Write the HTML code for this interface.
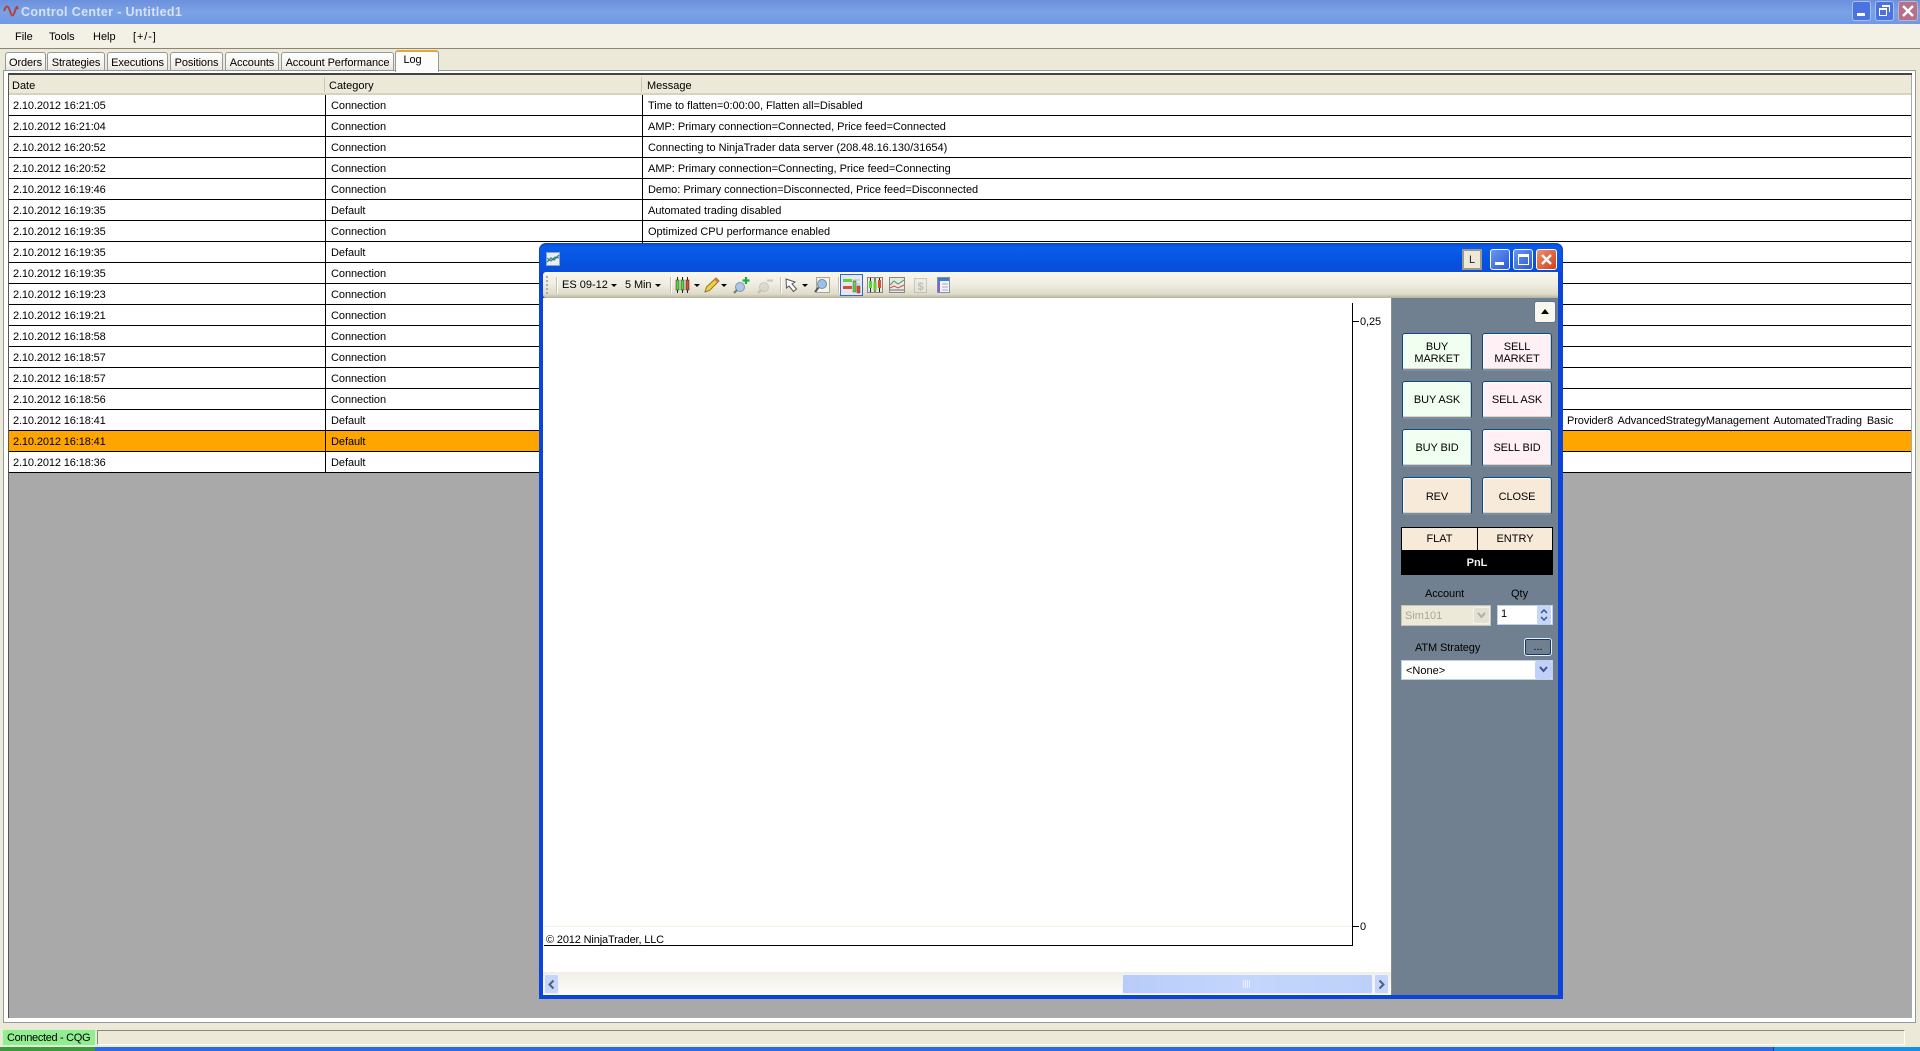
<!DOCTYPE html>
<html><head><meta charset="utf-8"><title>Control Center - Untitled1</title>
<style>
html,body{margin:0;padding:0;width:1920px;height:1051px;overflow:hidden;background:#ece9d8}
body{position:relative;font:11px/14px "Liberation Sans",sans-serif;color:#000}
div,svg,span{position:absolute;white-space:nowrap;box-sizing:border-box}
.tab{top:52px;height:19px;background:linear-gradient(#fff,#f2f0e8 70%,#e4e2d6);border:1px solid #919b9c;border-bottom:0;border-radius:3px 3px 0 0;text-align:center;line-height:21px;font-size:11px;letter-spacing:-.1px}
.r{left:9px;width:1902px;height:21px;background:#fff;border-bottom:1px solid #000}
.r span{top:4px}
.r .d{left:4px;letter-spacing:-.12px}.r .c{left:322px;letter-spacing:-.06px}.r .m{left:639px;letter-spacing:-.02px}
.r i{position:absolute;top:0;width:1px;height:21px;background:#000}
.o{background:#ffa500}
.b{width:70px;height:38px;border:1px solid #0d4a80;border-bottom:2px solid #7d8ea0;border-radius:3px;box-shadow:inset 1px 1px 0 #fff,inset -1px -1px 0 #d8d5c6;text-align:center;color:#000;font-size:11px;line-height:12px;letter-spacing:-.1px}
.g{background:#f0fff0}.p{background:#fff0f5}.n{background:#f8ead9}
.wb{border:1px solid #fff;border-radius:3px;top:249px;width:20px;height:21px}
.sep{top:277px;width:1px;height:16px;background:#c5c2b0;border-right:1px solid #fff;width:2px}
.ar{width:0;height:0;border:3px solid transparent;border-top:3px solid #000;border-bottom:0}
</style></head><body>

<!-- main title bar -->
<div style="left:0;top:0;width:1920px;height:24px;background:linear-gradient(#6c90dc,#7aa2e6 50%,#7099e2)"></div>
<svg style="left:3px;top:2px" width="16" height="18" viewBox="0 0 16 18"><path d="M1 9C3 3 5 3 7 9S10 15 12 9 14 5 15 7" fill="none" stroke="#b5413f" stroke-width="2"/></svg>
<div style="left:21px;top:4px;font:bold 12.5px/16px 'Liberation Sans',sans-serif;color:#d6e0f6;letter-spacing:.35px">Control Center - Untitled1</div>
<div style="left:1852px;top:1px;width:19px;height:20px;background:#4a72e0;border:1px solid #a8c0f0;border-radius:3px"></div>
<div style="left:1857px;top:13px;width:8px;height:3px;background:#fff"></div>
<div style="left:1875px;top:1px;width:19px;height:20px;background:#4a72e0;border:1px solid #a8c0f0;border-radius:3px"></div>
<div style="left:1879px;top:8px;width:8px;height:8px;border:1px solid #fff;border-top-width:2px"></div>
<div style="left:1882px;top:5px;width:8px;height:7px;border:1px solid #fff;border-top-width:2px;border-left:0;border-bottom:0"></div>
<div style="left:1898px;top:1px;width:20px;height:20px;background:#b57189;border:1px solid #c8b0c8;border-radius:3px"></div>
<svg style="left:1901px;top:4px" width="14" height="14"><path d="M2 2L12 12M12 2L2 12" stroke="#fff" stroke-width="2.4"/></svg>

<!-- menu -->
<div style="left:0;top:24px;width:1920px;height:24px;background:#f3f1e6"></div>
<div style="left:0;top:48px;width:1920px;height:1px;background:#8a8875"></div>
<div style="left:15px;top:30px">File</div>
<div style="left:49px;top:30px">Tools</div>
<div style="left:93px;top:30px">Help</div>
<div style="left:133px;top:30px;letter-spacing:.9px">[+/-]</div>

<!-- tabs -->
<div class="tab" style="left:5px;width:41px">Orders</div>
<div class="tab" style="left:47px;width:58px">Strategies</div>
<div class="tab" style="left:107px;width:61px">Executions</div>
<div class="tab" style="left:170px;width:53px">Positions</div>
<div class="tab" style="left:225px;width:54px">Accounts</div>
<div class="tab" style="left:281px;width:113px">Account Performance</div>

<!-- panel -->
<div style="left:3px;top:70px;width:1913px;height:953px;background:#fff;border:1px solid #919b9c"></div>
<div class="tab" style="left:395px;top:50px;width:44px;height:22px;background:#fcfcfa;border-top:2px solid #e8a33c;line-height:17px;padding-right:9px;border-color:#e8a33c #919b9c #fff;z-index:1">Log</div>

<!-- grid bg -->
<div style="left:8px;top:73px;width:1904px;height:945px;background:#a9a9a9;border-left:1px solid #555;border-top:2px solid #444"></div>
<div style="left:9px;top:75px;width:1902px;height:20px;background:#ece9d8;border-bottom:2px solid #d5d2c0"></div>
<div style="left:324px;top:77px;width:1px;height:15px;background:#c9c6b4"></div>
<div style="left:641px;top:77px;width:1px;height:15px;background:#c9c6b4"></div>
<div style="left:12px;top:79px">Date</div>
<div style="left:329px;top:79px">Category</div>
<div style="left:647px;top:79px">Message</div>
<div style="left:1910px;top:95px;width:1px;height:378px;background:#000"></div>

<!-- rows -->
<div class="r" style="top:95px"><i style="left:316px"></i><i style="left:633px"></i><span class="d">2.10.2012 16:21:05</span><span class="c">Connection</span><span class="m">Time to flatten=0:00:00, Flatten all=Disabled</span></div>
<div class="r" style="top:116px"><i style="left:316px"></i><i style="left:633px"></i><span class="d">2.10.2012 16:21:04</span><span class="c">Connection</span><span class="m">AMP: Primary connection=Connected, Price feed=Connected</span></div>
<div class="r" style="top:137px"><i style="left:316px"></i><i style="left:633px"></i><span class="d">2.10.2012 16:20:52</span><span class="c">Connection</span><span class="m">Connecting to NinjaTrader data server (208.48.16.130/31654)</span></div>
<div class="r" style="top:158px"><i style="left:316px"></i><i style="left:633px"></i><span class="d">2.10.2012 16:20:52</span><span class="c">Connection</span><span class="m">AMP: Primary connection=Connecting, Price feed=Connecting</span></div>
<div class="r" style="top:179px"><i style="left:316px"></i><i style="left:633px"></i><span class="d">2.10.2012 16:19:46</span><span class="c">Connection</span><span class="m">Demo: Primary connection=Disconnected, Price feed=Disconnected</span></div>
<div class="r" style="top:200px"><i style="left:316px"></i><i style="left:633px"></i><span class="d">2.10.2012 16:19:35</span><span class="c">Default</span><span class="m">Automated trading disabled</span></div>
<div class="r" style="top:221px"><i style="left:316px"></i><i style="left:633px"></i><span class="d">2.10.2012 16:19:35</span><span class="c">Connection</span><span class="m">Optimized CPU performance enabled</span></div>
<div class="r" style="top:242px"><i style="left:316px"></i><i style="left:633px"></i><span class="d">2.10.2012 16:19:35</span><span class="c">Default</span></div>
<div class="r" style="top:263px"><i style="left:316px"></i><i style="left:633px"></i><span class="d">2.10.2012 16:19:35</span><span class="c">Connection</span></div>
<div class="r" style="top:284px"><i style="left:316px"></i><i style="left:633px"></i><span class="d">2.10.2012 16:19:23</span><span class="c">Connection</span></div>
<div class="r" style="top:305px"><i style="left:316px"></i><i style="left:633px"></i><span class="d">2.10.2012 16:19:21</span><span class="c">Connection</span></div>
<div class="r" style="top:326px"><i style="left:316px"></i><i style="left:633px"></i><span class="d">2.10.2012 16:18:58</span><span class="c">Connection</span></div>
<div class="r" style="top:347px"><i style="left:316px"></i><i style="left:633px"></i><span class="d">2.10.2012 16:18:57</span><span class="c">Connection</span></div>
<div class="r" style="top:368px"><i style="left:316px"></i><i style="left:633px"></i><span class="d">2.10.2012 16:18:57</span><span class="c">Connection</span></div>
<div class="r" style="top:389px"><i style="left:316px"></i><i style="left:633px"></i><span class="d">2.10.2012 16:18:56</span><span class="c">Connection</span></div>
<div class="r" style="top:410px;height:21px"><i style="left:316px"></i><i style="left:633px"></i><span class="d">2.10.2012 16:18:41</span><span class="c">Default</span><span style="left:1558px;word-spacing:2px;letter-spacing:-.1px">Provider8 AdvancedStrategyManagement AutomatedTrading Basic</span></div>
<div class="r o" style="top:431px"><i style="left:316px"></i><i style="left:633px"></i><span class="d">2.10.2012 16:18:41</span><span class="c">Default</span></div>
<div class="r" style="top:452px"><i style="left:316px"></i><i style="left:633px"></i><span class="d">2.10.2012 16:18:36</span><span class="c">Default</span></div>

<!-- status bar -->
<div style="left:2px;top:1029px;width:94px;height:17px;background:#90ee90;border:1px solid #d8f0d0;line-height:16px;padding-left:4px;letter-spacing:-.32px">Connected - CQG</div>
<div style="left:97px;top:1030px;width:1808px;height:15px;background:#ece9d8;border-top:1px solid #8a8875;border-left:1px solid #8a8875;border-bottom:1px solid #fff;border-right:1px solid #fff"></div>
<div style="left:0;top:1047px;width:95px;height:4px;background:#3c9a3c"></div>
<div style="left:95px;top:1047px;width:1825px;height:4px;background:#2a6ae8"></div>
<div style="left:1773px;top:1047px;width:1px;height:4px;background:#123a90"></div>
<div style="left:1774px;top:1047px;width:146px;height:4px;background:#1590ea"></div>

<!-- child window -->
<div style="left:539px;top:243px;width:1024px;height:756px;background:#0a44d8;border-radius:7px 7px 0 0"></div>
<div style="left:540px;top:244px;width:1022px;height:28px;background:linear-gradient(#0a4fd8,#0a5cea 12%,#0552e0 70%,#0a4cd8);border-radius:7px 7px 0 0"></div>
<svg style="left:546px;top:252px" width="14" height="14"><rect x=".5" y=".5" width="13" height="13" fill="#e8ecf4" stroke="#8ea4c8"/><path d="M1 10L5 6 8 8 13 3" fill="none" stroke="#2a9a50" stroke-width="1.4"/><path d="M1 6L5 9 9 5 13 6" fill="none" stroke="#3060c0"/></svg>
<div style="left:1462px;top:249px;width:20px;height:21px;background:#ece9d8;border:2px solid #9c9a8a;text-align:center;line-height:18px;color:#222">L</div>
<div class="wb" style="left:1490px;background:linear-gradient(135deg,#6a96f0,#2a58d8)"></div>
<div style="left:1495px;top:262px;width:9px;height:3px;background:#fff"></div>
<div class="wb" style="left:1513px;background:linear-gradient(135deg,#6a96f0,#2a58d8)"></div>
<div style="left:1518px;top:254px;width:11px;height:11px;border:1px solid #fff;border-top-width:3px"></div>
<div class="wb" style="left:1536px;width:21px;background:linear-gradient(135deg,#f0906a,#d0401c)"></div>
<svg style="left:1540px;top:253px" width="13" height="13"><path d="M2 2L11 11M11 2L2 11" stroke="#fff" stroke-width="2.4"/></svg>

<!-- toolbar -->
<div style="left:543px;top:272px;width:1015px;height:26px;background:linear-gradient(#f9f8f1,#f0eee2 45%,#dedbc9 85%,#b5b29c);border-radius:3px 0 0 3px"></div>
<svg style="left:545px;top:276px" width="5" height="18"><path d="M1 1h2M1 5h2M1 9h2M1 13h2M1 17h2" stroke="#b0ae9c" stroke-width="2"/></svg>
<div class="sep" style="left:556px"></div>
<div style="left:562px;top:278px">ES 09-12</div><div class="ar" style="left:611px;top:284px"></div>
<div style="left:625px;top:278px;letter-spacing:-.1px">5 Min</div><div class="ar" style="left:655px;top:284px"></div>
<div class="sep" style="left:670px"></div>
<svg style="left:675px;top:277px" width="16" height="16"><path d="M2.500 0v16M7.500 0v16M12.500 0v16" stroke="#222"/><rect x="1" y="3" width="3" height="10" fill="#5fd23a" stroke="#222" stroke-width=".5"/><rect x="6" y="3" width="3" height="10" fill="#5fd23a" stroke="#222" stroke-width=".5"/><rect x="11" y="3" width="3" height="10" fill="#e04a30" stroke="#222" stroke-width=".5"/></svg>
<div class="ar" style="left:694px;top:284px"></div>
<svg style="left:704px;top:277px" width="16" height="16"><path d="M1 15L2.500 10 12 1 15 4 5.500 13.500Z" fill="#f3cf3c" stroke="#8a7a28"/><path d="M11 2L14 5" stroke="#e07060" stroke-width="2"/></svg>
<div class="ar" style="left:721px;top:284px"></div>
<svg style="left:733px;top:277px" width="17" height="17"><circle cx="7" cy="10" r="4.500" fill="#aac8ec" stroke="#8a94a0"/><path d="M4 13L1 16" stroke="#777" stroke-width="2"/><path d="M13 0v7M9.500 3.500h7" stroke="#18b040" stroke-width="2.200"/></svg>
<svg style="left:757px;top:277px" width="17" height="17" opacity=".45"><circle cx="7" cy="10" r="4.500" fill="#c8c8c0" stroke="#a0a098"/><path d="M4 13L1 16" stroke="#999" stroke-width="2"/><path d="M10 3.500h6" stroke="#999" stroke-width="2"/></svg>
<div class="sep" style="left:780px"></div>
<svg style="left:785px;top:278px" width="15" height="15"><path d="M1 1L1.500 10 4 8 8.500 13.500 11.500 11 7 6 10 4Z" fill="#fff" stroke="#555"/></svg>
<div class="ar" style="left:802px;top:284px"></div>
<svg style="left:814px;top:277px" width="16" height="17"><rect x="2.500" y=".5" width="13" height="15" fill="#f4f3ec" stroke="#a8a694"/><circle cx="8" cy="7" r="4.500" fill="#9cc0e8" stroke="#7c8a98"/><path d="M4.500 10.500L1 15" stroke="#555" stroke-width="2"/></svg>
<div class="sep" style="left:838px"></div>
<div style="left:840px;top:274px;width:23px;height:22px;background:#e4e9ef;border:1px solid #316ac5"></div>
<svg style="left:842px;top:277px" width="19" height="17"><path d="M1 2h9v3H1z" fill="#5fd23a"/><path d="M1 9h9v3H1z" fill="#e04a30"/><rect x="11" y="4" width="3" height="11" fill="#5fd23a" stroke="#555" stroke-width=".5"/><rect x="15" y="9" width="3" height="7" fill="#e04a30" stroke="#555" stroke-width=".5"/><path d="M11 3h7M11 7h7" stroke="#aaa" stroke-width=".7"/></svg>
<svg style="left:867px;top:277px" width="16" height="16"><rect x=".5" y=".5" width="15" height="15" fill="#e8e7dc" stroke="#888"/><path d="M3.500 1v14M8 1v14M12.500 1v14" stroke="#222"/><rect x="2" y="4" width="3" height="7" fill="#5fd23a"/><rect x="6.500" y="5" width="3" height="8" fill="#5fd23a"/><rect x="11" y="3" width="3" height="8" fill="#e04a30"/></svg>
<svg style="left:889px;top:277px" width="16" height="16"><rect x=".5" y=".5" width="15" height="15" fill="#e8e8e0" stroke="#888"/><path d="M1 8L5 4 9 7 15 3" fill="none" stroke="#3a9a60"/><path d="M1 11L5 9 9 11 15 8" fill="none" stroke="#d05050"/><path d="M1 13h14" stroke="#aaa" stroke-width="2"/></svg>
<svg style="left:914px;top:278px" width="13" height="15" opacity=".55"><rect x=".5" y=".5" width="12" height="14" fill="#e8e8e0" stroke="#aaa"/><text x="6.500" y="12" text-anchor="middle" font-size="11" font-weight="bold" font-family="Liberation Sans" fill="#999">$</text></svg>
<svg style="left:937px;top:277px" width="13" height="16"><rect x=".5" y=".5" width="12" height="15" fill="#f4f4fa" stroke="#8090a8"/><rect x="1" y="1" width="11" height="3" fill="#3a80c8"/><rect x="1" y="4" width="2" height="11" fill="#8a60d0"/><path d="M5 7h6M5 10h6M5 13h6" stroke="#a0a8c0"/></svg>

<!-- chart -->
<div style="left:543px;top:298px;width:849px;height:697px;background:#fff"></div>
<div style="left:544px;top:926px;width:808px;height:1px;background:#f0efe3"></div>
<div style="left:544px;top:945px;width:809px;height:1px;background:#000"></div>
<div style="left:1352px;top:303px;width:1px;height:643px;background:#000"></div>
<div style="left:1352px;top:321px;width:7px;height:1px;background:#000"></div>
<div style="left:1352px;top:926px;width:7px;height:1px;background:#000"></div>
<div style="left:1360px;top:315px;letter-spacing:-.1px">0,25</div>
<div style="left:1360px;top:920px">0</div>
<div style="left:546px;top:933px;letter-spacing:-.15px">© 2012 NinjaTrader, LLC</div>

<!-- scrollbar -->
<div style="left:543px;top:972px;width:849px;height:23px;background:linear-gradient(#f0eee6,#fdfdfb)"></div>
<div style="left:544px;top:974px;width:15px;height:20px;background:#c6d6f8;border:1px solid #eef2fc;border-radius:2px"></div>
<svg style="left:547px;top:979px" width="9" height="11"><path d="M6.500 1.500L2.500 5.500 6.500 9.500" fill="none" stroke="#4d6185" stroke-width="2"/></svg>
<div style="left:1122px;top:974px;width:251px;height:20px;background:linear-gradient(90deg,#b8ccfa,#c4d6fc 50%,#bcd0fa);border:1px solid #eef2fc;border-radius:2px"></div>
<svg style="left:1243px;top:980px" width="8" height="8"><path d="M.5 0v8M2.500 0v8M4.500 0v8M6.500 0v8" stroke="#eef2fc"/></svg>
<div style="left:1374px;top:974px;width:15px;height:20px;background:#c6d6f8;border:1px solid #eef2fc;border-radius:2px"></div>
<svg style="left:1377px;top:979px" width="9" height="11"><path d="M2.500 1.500L6.500 5.500 2.500 9.500" fill="none" stroke="#4d6185" stroke-width="2"/></svg>

<!-- side panel -->
<div style="left:1391px;top:298px;width:167px;height:697px;background:#708090;border-left:1px solid #8e8e88"></div>
<div style="left:1534px;top:301px;width:22px;height:22px;background:#f8f7ef;border:1px solid #5f7486;border-radius:3px"></div>
<div style="left:1541px;top:309px;width:0;height:0;border:4px solid transparent;border-bottom:5px solid #000;border-top:0"></div>
<div class="b g" style="left:1402px;top:333px;padding-top:7px">BUY<br>MARKET</div>
<div class="b p" style="left:1482px;top:333px;padding-top:7px">SELL<br>MARKET</div>
<div class="b g" style="left:1402px;top:381px;line-height:37px">BUY ASK</div>
<div class="b p" style="left:1482px;top:381px;line-height:37px">SELL ASK</div>
<div class="b g" style="left:1402px;top:429px;line-height:37px">BUY BID</div>
<div class="b p" style="left:1482px;top:429px;line-height:37px">SELL BID</div>
<div class="b n" style="left:1402px;top:477px;line-height:38px">REV</div>
<div class="b n" style="left:1482px;top:477px;line-height:38px">CLOSE</div>

<div style="left:1401px;top:527px;width:152px;height:48px;background:#000"></div>
<div style="left:1402px;top:528px;width:75px;height:22px;background:#f8ead9;text-align:center;line-height:23px">FLAT</div>
<div style="left:1478px;top:528px;width:74px;height:22px;background:#f8ead9;text-align:center;line-height:23px">ENTRY</div>
<div style="left:1401px;top:550px;width:152px;height:25px;color:#f0f0f0;font-weight:bold;text-align:center;line-height:26px">PnL</div>

<div style="left:1425px;top:587px;letter-spacing:-.1px">Account</div>
<div style="left:1511px;top:587px">Qty</div>
<div style="left:1401px;top:605px;width:90px;height:21px;background:#ece9d8;border:1px solid #c5c4b6;color:#a8a794;line-height:21px;padding-left:3px">Sim101</div>
<div style="left:1473px;top:607px;width:17px;height:17px;background:#e2e0d2;border:1px solid #f4f3ea;border-radius:2px"></div>
<svg style="left:1477px;top:612px" width="9" height="7"><path d="M1 1L4.500 5 8 1" fill="none" stroke="#b0aea0" stroke-width="2"/></svg>
<div style="left:1497px;top:605px;width:56px;height:20px;background:#fff;border:1px solid #bcd0e8;line-height:16px;padding-left:3px">1</div>
<div style="left:1537px;top:606px;width:14px;height:9px;background:#c6d6f8"></div>
<div style="left:1537px;top:615px;width:14px;height:9px;background:#c6d6f8"></div>
<svg style="left:1539px;top:608px" width="10" height="14"><path d="M2 5L5 2 8 5M2 9L5 12 8 9" fill="none" stroke="#3c5490" stroke-width="1.500"/></svg>
<div style="left:1415px;top:641px;letter-spacing:-.1px">ATM Strategy</div>
<div style="left:1524px;top:638px;width:28px;height:18px;background:#708090;border:1px solid #f0f0f0;border-radius:3px;box-shadow:inset 0 0 0 1px #0d3a70;text-align:center;line-height:16px">...</div>
<div style="left:1401px;top:660px;width:152px;height:20px;background:#fff;border:1px solid #bcd0e8;line-height:20px;padding-left:4px">&lt;None&gt;</div>
<div style="left:1535px;top:661px;width:17px;height:18px;background:#c0d0f8;border-radius:2px"></div>
<svg style="left:1539px;top:666px" width="9" height="8"><path d="M1 1L4.500 5 8 1" fill="none" stroke="#3c5490" stroke-width="2"/></svg>
</body></html>
